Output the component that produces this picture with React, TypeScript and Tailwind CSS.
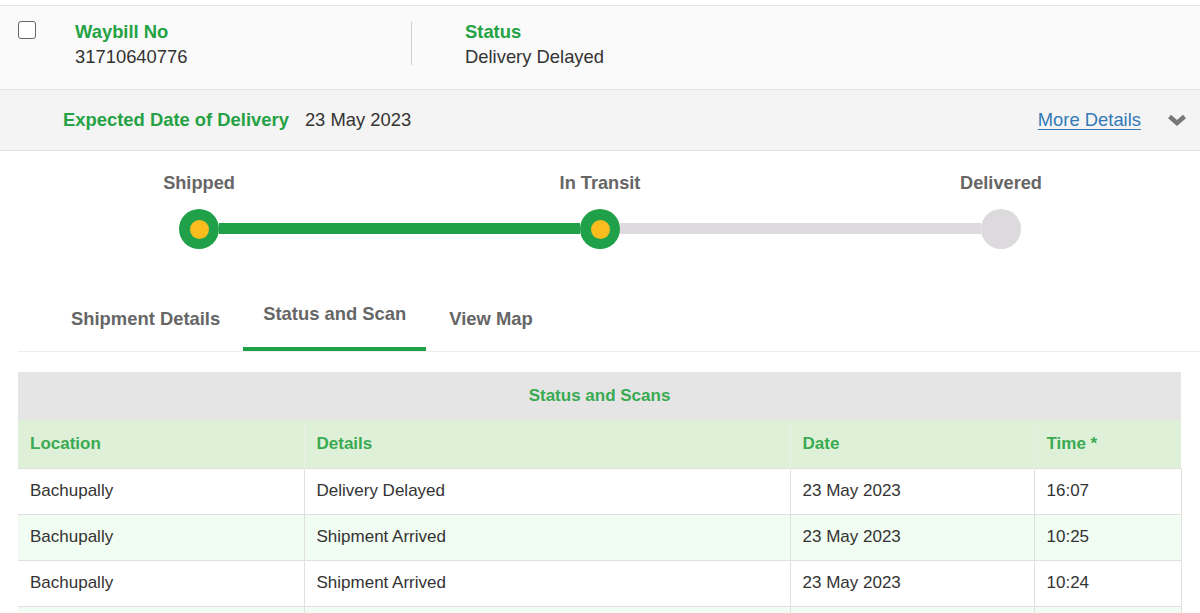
import React from "react";

const rows = [
  { location: "Bachupally", details: "Delivery Delayed", date: "23 May 2023", time: "16:07" },
  { location: "Bachupally", details: "Shipment Arrived", date: "23 May 2023", time: "10:25" },
  { location: "Bachupally", details: "Shipment Arrived", date: "23 May 2023", time: "10:24" },
  { location: "", details: "", date: "", time: "" },
];

function Step({ label, done }: { label: string; done: boolean }) {
  return (
    <div className="flex flex-col items-center w-10">
      <div className="whitespace-nowrap text-[18.2px] leading-[22px] font-bold text-[#666] mb-[15px]">{label}</div>
      {done ? (
        <div className="w-10 h-10 rounded-full bg-[#21a04a] flex items-center justify-center">
          <div className="w-[19px] h-[19px] rounded-full bg-[#fbbd1d]" />
        </div>
      ) : (
        <div className="w-10 h-10 rounded-full bg-[#dcdadc]" />
      )}
    </div>
  );
}

export default function App() {
  return (
    <div className="w-[1200px] h-[613px] overflow-hidden bg-white pt-[5px] text-[#333]" style={{ fontFamily: '"Liberation Sans", Arial, sans-serif' }}>
      {/* Waybill header */}
      <div className="h-[85px] bg-[#fafafa] border-t border-b border-[#e4e4e4] flex items-start">
        <div className="ml-[18px] mt-[15px] w-[18px] h-[18px] rounded-[3px] border-[1.5px] border-[#666] bg-white" />
        <div className="ml-[39px] mt-[13px] w-[336px] text-[18.4px] leading-[25px]">
          <div className="font-bold text-[#25a244]">Waybill No</div>
          <div>31710640776</div>
        </div>
        <div className="mt-[16px] w-px h-[43px] bg-[#cfcfcf]" />
        <div className="ml-[53px] mt-[13px] text-[18.4px] leading-[25px]">
          <div className="font-bold text-[#25a244]">Status</div>
          <div>Delivery Delayed</div>
        </div>
      </div>

      {/* Expected delivery band */}
      <div className="h-[61px] bg-[#f4f4f4] border-b border-[#e2e2e2] flex items-center text-[18.4px]">
        <span className="ml-[63px] font-bold text-[#25a244]">Expected Date of Delivery</span>
        <span className="ml-[16px]">23 May 2023</span>
        <a href="#" className="ml-auto text-[#337ab7] underline underline-offset-[3px]">More Details</a>
        <svg className="ml-[26px] mr-[13px]" width="20" height="12" viewBox="0 0 20 12">
          <polyline points="2.5,2.5 10,9 17.5,2.5" fill="none" stroke="#777" strokeWidth="4.5" strokeLinejoin="miter" />
        </svg>
      </div>

      {/* Progress tracker */}
      <div className="ml-[179px] mt-[21px] w-[842px] flex items-end">
        <Step label="Shipped" done />
        <div className="flex-1 h-[11px] mb-[15px] bg-[#21a04a]" />
        <Step label="In Transit" done />
        <div className="flex-1 h-[11px] mb-[15px] bg-[#dddbdd]" />
        <Step label="Delivered" done={false} />
      </div>

      {/* Tabs */}
      <div className="ml-[18px] mt-[54px] flex items-end gap-[3px] border-b border-[#eeeeee] text-[18.4px] leading-[22px] font-bold text-[#666]">
        <div className="ml-[33px] px-[20px] pb-[21px]">Shipment Details</div>
        <div className="px-[20px] pb-[22px] border-b-4 border-[#21a04a]">Status and Scan</div>
        <div className="px-[20px] pb-[21px]">View Map</div>
      </div>

      {/* Status table */}
      <table className="ml-[18px] mt-[20px] w-[1163px] border-collapse text-[17px] table-fixed">
        <colgroup>
          <col className="w-[286px]" />
          <col className="w-[486px]" />
          <col className="w-[244px]" />
          <col className="w-[147px]" />
        </colgroup>
        <thead>
          <tr className="h-[48px] bg-[#e5e5e5]">
            <th colSpan={4} className="text-center font-bold text-[#3aaa52]">Status and Scans</th>
          </tr>
          <tr className="h-[48px] bg-[#dff0d8] text-left text-[#3aaa52]">
            <th className="pl-[12px] font-bold border-r border-[#e9efe6]">Location</th>
            <th className="pl-[12px] font-bold border-r border-[#e9efe6]">Details</th>
            <th className="pl-[12px] font-bold border-r border-[#e9efe6]">Date</th>
            <th className="pl-[12px] font-bold">Time *</th>
          </tr>
        </thead>
        <tbody>
          {rows.map((r, i) => (
            <tr key={i} className={`h-[46px] ${i % 2 === 1 ? "bg-[#f1fcf2]" : "bg-white"}`}>
              <td className="pl-[12px] border border-[#e0e0e0] border-l-0">{r.location}</td>
              <td className="pl-[12px] border border-[#e0e0e0]">{r.details}</td>
              <td className="pl-[12px] border border-[#e0e0e0]">{r.date}</td>
              <td className="pl-[12px] border border-[#e0e0e0]">{r.time}</td>
            </tr>
          ))}
        </tbody>
      </table>
    </div>
  );
}
